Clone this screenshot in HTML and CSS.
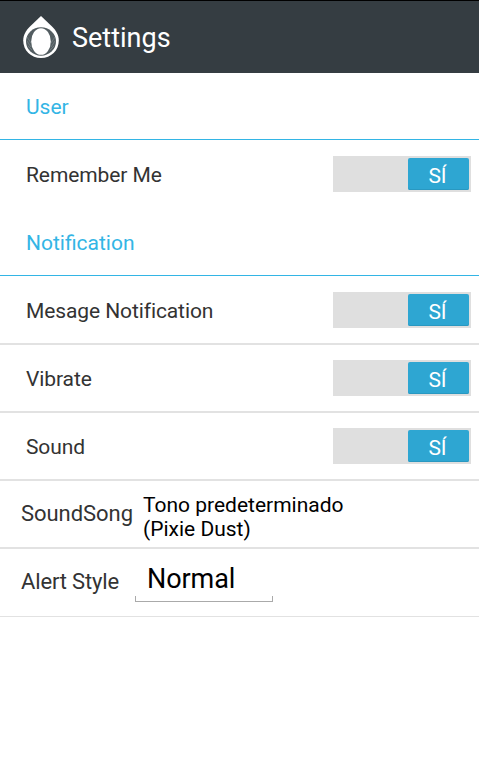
FILE: index.html
```html
<!DOCTYPE html>
<html lang="en">
<head>
<meta charset="utf-8">
<title>Settings</title>
<link rel="stylesheet" href="styles.css">
</head>
<body>
<header class="bar">
<svg class="logo" width="38" height="44" viewBox="0 0 38 44"><path d="M19 1L8 11.500C4 15.500 1.200 20 1.200 25.500C1.200 35.500 9 43 19 43S36.800 35.500 36.800 25.500C36.800 20 34 15.500 30 11.500Z" fill="#fff"/><ellipse cx="19" cy="26.500" rx="15" ry="14.200" fill="#535d61"/><path d="M5 22l4 6M5 26l4 6M6 31l4 4M33 22l-4 6M33 26l-4 6M32 31l-4 4" stroke="#758084" stroke-width=".8"/><ellipse cx="19" cy="26.500" rx="9.800" ry="13.300" fill="#fff"/></svg>
<h1>Settings</h1>
</header>
<main>
<h2 class="section">User</h2>
<div class="row plain"><span class="label">Remember Me</span><div class="switch"><div class="thumb">SÍ</div></div></div>
<h2 class="section">Notification</h2>
<div class="row first"><span class="label">Mesage Notification</span><div class="switch"><div class="thumb">SÍ</div></div></div>
<div class="row"><span class="label">Vibrate</span><div class="switch"><div class="thumb">SÍ</div></div></div>
<div class="row"><span class="label">Sound</span><div class="switch"><div class="thumb">SÍ</div></div></div>
<div class="row wide"><span class="name">SoundSong</span><span class="song">Tono predeterminado<br>(Pixie Dust)</span></div>
<div class="row wide last"><span class="name style">Alert Style</span><div class="spinner">Normal</div></div>
</main>
</body>
</html>
```
FILE: styles.css
```css
* { box-sizing: border-box; }
body { margin: 0; background: #fff; color: #333; font-family: Roboto, sans-serif; font-size: 21px; }
.bar { height: 73px; background: #353d42; border-top: 1px solid #000; display: flex; align-items: center; padding-left: 22px; }
.logo { margin-right: 12px; }
h1 { margin: 0; padding-top: 2px; font-size: 27px; font-weight: 400; color: #fff; }
.section { margin: 0; height: 67px; padding: 1px 0 0 26px; border-bottom: 1px solid #33b5e5; font-size: 21px; font-weight: 400; line-height: 67px; color: #33b5e5; }
.row { height: 68px; display: flex; align-items: center; padding: 0 8px 0 26px; border-bottom: 2px solid #e2e2e2; letter-spacing: -0.1px; }
.row.first { height: 69px; padding-top: 1px; }
.row.plain { border: 0; height: 69px; padding-bottom: 1px; }
.label { padding-top: 2px; }
.switch { width: 138px; height: 36px; margin-left: auto; background: #dfdfdf; display: flex; justify-content: flex-end; padding: 2px; }
.thumb { width: 61px; height: 32px; padding-right: 2px; background: #2ea6d2; border-radius: 2px; box-shadow: inset 0 -1px #2998c1; color: #fff; text-align: center; line-height: 36px; }
.row.wide { padding: 0 8px 0 21px; }
.name { margin-top: -2px; font-size: 22px; letter-spacing: -0.05px; }
.name.style { letter-spacing: -0.15px; }
.song { margin: 6px 0 0 10px; color: #000; line-height: 24px; letter-spacing: 0; }
.row.last { border-bottom-width: 1px; }
.spinner { position: relative; margin: 1px 0 0 16px; width: 138px; height: 38px; padding-left: 12px; color: #000; font-size: 27px; line-height: 30px; letter-spacing: -0.1px; border-bottom: 1px solid #aaa; }
.spinner::after { content: ""; position: absolute; inset: auto 0 0; height: 5px; border: solid #aaa; border-width: 0 1px; }
```
